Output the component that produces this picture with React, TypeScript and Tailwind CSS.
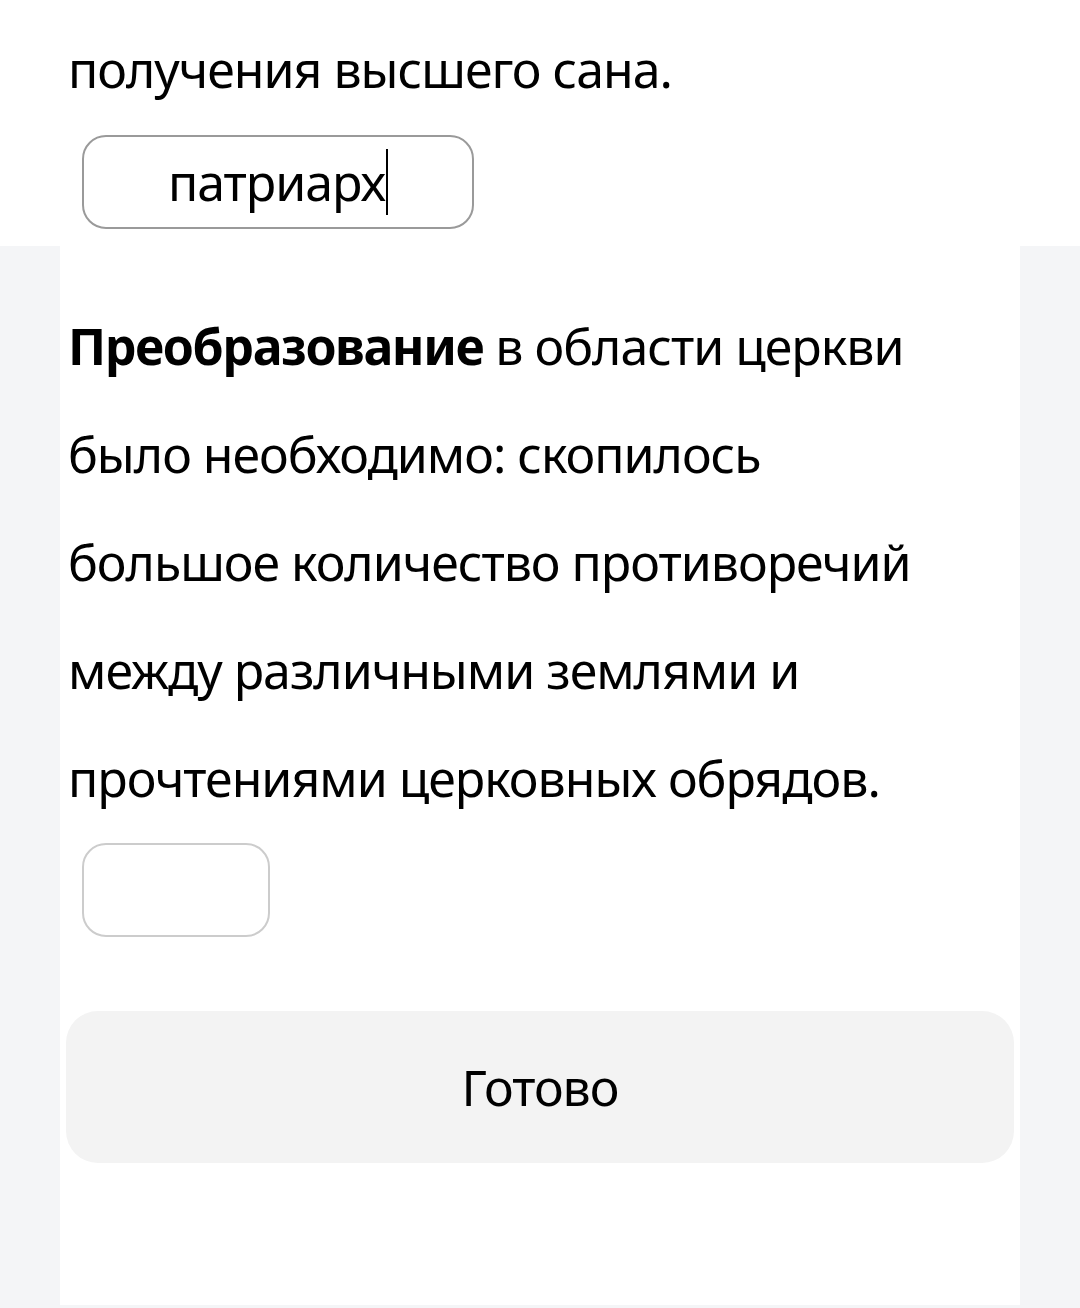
import React from "react";

export default function App() {
  return (
    <div className="w-[1080px] h-[1308px] overflow-hidden bg-[#f4f5f7] text-black font-['Noto_Sans',sans-serif] tracking-[-1px]">
      <div className="bg-white h-[246px] pl-[68px] pt-[15px]">
        <p className="text-[50px] leading-[108px]">получения высшего сана.</p>
        <div className="ml-[14px] mt-[12px] w-[392px] h-[94px] rounded-[24px] border-2 border-[#9a9a9a] flex items-center justify-center">
          <span className="text-[50px] leading-none">патриарх</span>
          <span className="w-[2px] h-[66px] bg-black ml-[1px]" />
        </div>
      </div>
      <div className="mx-[60px] bg-white h-[1059px] pt-[46px] px-[6px]">
        <p className="pl-[2px] text-[50px] leading-[108px]">
          <b className="font-bold tracking-[-1.4px]">Преобразование</b> в области церкви
          <br />
          было необходимо: скопилось
          <br />
          большое количество противоречий
          <br />
          между различными землями и
          <br />
          прочтениями церковных обрядов.
        </p>
        <div className="ml-[16px] mt-[11px] w-[188px] h-[94px] rounded-[24px] border-2 border-[#cccccc]" />
        <button className="mt-[74px] w-[948px] h-[152px] rounded-[32px] bg-[#f3f3f3] flex items-center justify-center text-[50px] leading-none">
          Готово
        </button>
      </div>
    </div>
  );
}
